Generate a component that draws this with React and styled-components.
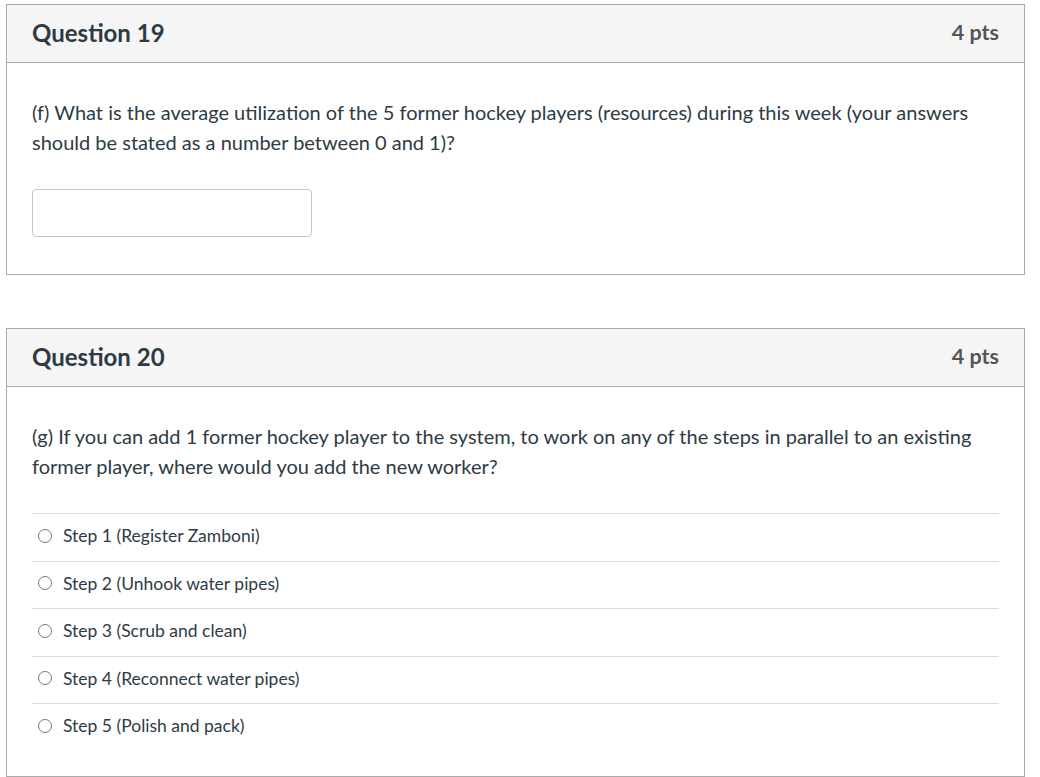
import React from "react";
import styled, { createGlobalStyle } from "styled-components";

const Global = createGlobalStyle`
  html, body { margin: 0; padding: 0; background: #fff; }
  body { font-family: Lato, "Open Sans", sans-serif; color: #2d3b45; }
`;

const Page = styled.div`
  padding: 4px 15px 0 6px;
  display: flex;
  flex-direction: column;
  gap: 53px;
`;

const Card = styled.section`
  border: 1px solid #aaaaaa;
  background: #fff;
`;

const Header = styled.header`
  height: 58px;
  box-sizing: border-box;
  padding: 0 25px 2px;
  background: #f5f5f5;
  border-bottom: 1px solid #aaaaaa;
  display: flex;
  align-items: center;
  justify-content: space-between;
`;

const Title = styled.h2`
  margin: 0;
  font-size: 24px;
  font-weight: 700;
  color: #2d3b45;
`;

const Points = styled.span`
  font-size: 21.5px;
  font-weight: 700;
  color: #555;
  padding-bottom: 2px;
`;

const Body = styled.div`
  padding: ${p => p.$pad};
`;

const Prompt = styled.p`
  margin: 0;
  font-size: 20px;
  line-height: 30px;
  color: #2d3b45;
`;

const Input = styled.input`
  display: block;
  margin-top: 32px;
  width: 280px;
  height: 48px;
  box-sizing: border-box;
  border: 1px solid #c7c7c7;
  border-radius: 4px;
  background: #fff;
`;

const Options = styled.ul`
  list-style: none;
  margin: 32px 0 0;
  padding: 0;
`;

const Option = styled.li`
  box-sizing: border-box;
  border-top: 1px solid #dcdcdc;
  height: 47.5px;
  padding: 0 0 3px 6px;
  display: flex;
  align-items: center;
  gap: 11px;
  font-size: 17.5px;
  color: #2d3b45;
`;

const Radio = styled.span`
  width: 14px;
  height: 14px;
  border: 1px solid #767676;
  border-radius: 50%;
  box-sizing: border-box;
  flex: none;
`;

const steps = [
  "Step 1 (Register Zamboni)",
  "Step 2 (Unhook water pipes)",
  "Step 3 (Scrub and clean)",
  "Step 4 (Reconnect water pipes)",
  "Step 5 (Polish and pack)",
];

export default function App() {
  return (
    <>
      <Global />
      <Page>
        <Card>
          <Header>
            <Title>Question 19</Title>
            <Points>4 pts</Points>
          </Header>
          <Body $pad="34px 25px 37px">
            <Prompt>
              (f) What is the average utilization of the 5 former hockey players (resources) during this week (your answers should be stated as a number between 0 and 1)?
            </Prompt>
            <Input type="text" aria-label="answer" />
          </Body>
        </Card>
        <Card>
          <Header>
            <Title>Question 20</Title>
            <Points>4 pts</Points>
          </Header>
          <Body $pad="34px 25px 25px">
            <Prompt>
              (g) If you can add 1 former hockey player to the system, to work on any of the steps in parallel to an existing former player, where would you add the new worker?
            </Prompt>
            <Options>
              {steps.map((s, i) => (
                <Option key={i}>
                  <Radio />
                  {s}
                </Option>
              ))}
            </Options>
          </Body>
        </Card>
      </Page>
    </>
  );
}
